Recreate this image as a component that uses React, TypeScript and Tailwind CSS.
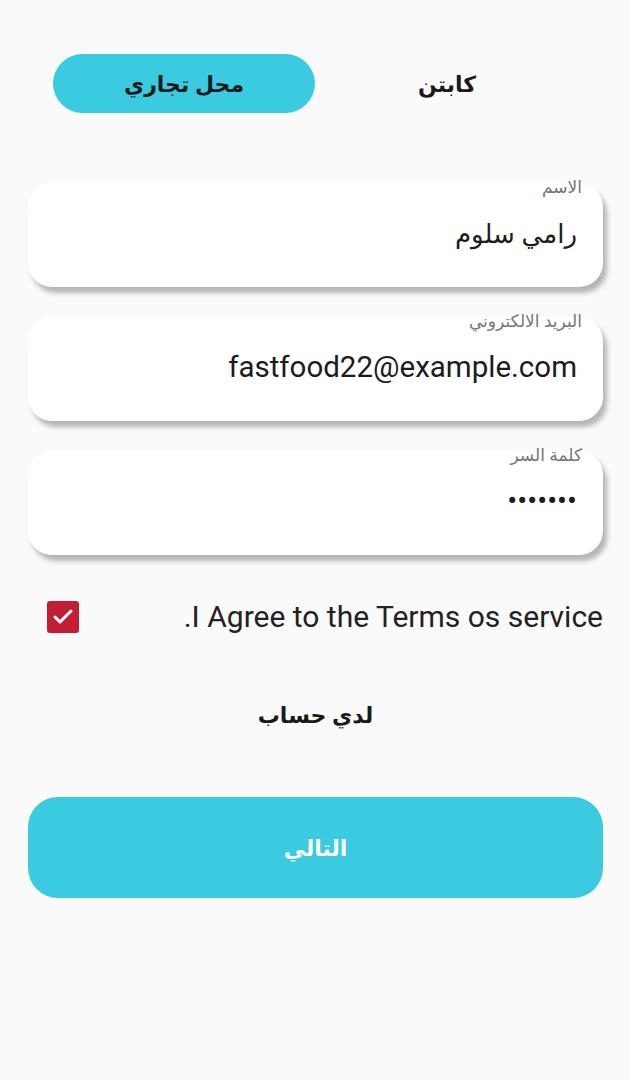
import { Check } from "lucide-react";

const arabic = "font-['Noto_Sans','DejaVu_Sans',sans-serif]";

const Field = ({ label, value, latin }: { label: string; value: string; latin?: boolean }) => (
    <div className="relative h-[104px] rounded-[24px] bg-white shadow-[4px_6px_5px_rgba(0,0,0,0.28)]">
        <span className={`absolute right-[21px] top-[-8px] text-[17px] leading-[24px] text-[#757575] ${arabic}`}>
            {label}
        </span>
        <div
            className={`flex h-full items-center justify-start pr-[26px] pb-[4px] text-[#1c1c1c] ${
                latin ? "font-['Roboto',sans-serif] text-[29.5px]" : `${arabic} text-[26px]`
            }`}
        >
            {value}
        </div>
    </div>
);

export default function App() {
    return (
        <div dir="rtl" className="min-h-[1080px] w-full bg-[#fafafa] px-[28px] pt-[54px]">
            {/* Tabs */}
            <div className="flex h-[59px] items-center pr-[24px] pl-[25px]">
                <div className={`flex flex-1 justify-center text-[22px] font-bold text-[#1a1a1a] ${arabic}`}>كابتن</div>
                <div
                    className={`flex h-[59px] w-[262px] items-center justify-center rounded-[30px] bg-[#3acbe0] text-[22px] font-bold text-[#1a1a1a] ${arabic}`}
                >
                    محل تجاري
                </div>
            </div>

            {/* Fields */}
            <div className="mt-[70px] flex flex-col gap-[30px]">
                <Field label="الاسم" value="رامي سلوم" />
                <Field label="البريد الالكتروني" value="fastfood22@example.com" latin />
                <Field label="كلمة السر" value="•••••••" latin />
            </div>

            {/* Terms */}
            <div className="mt-[46px] flex items-center justify-between pl-[19px]">
                <span className="font-['Roboto',sans-serif] text-[30px] leading-[32px] text-[#222]">
                    I Agree to the Terms os service.
                </span>
                <span className="flex h-[32px] w-[32px] items-center justify-center rounded-[3px] bg-[#c41e35]">
                    <Check className="h-[24px] w-[24px] text-white" strokeWidth={3} />
                </span>
            </div>

            <div className={`mt-[65px] text-center text-[22px] font-bold text-[#1a1a1a] ${arabic}`}>لدي حساب</div>

            {/* Next */}
            <button
                className={`mt-[66px] flex h-[101px] w-full items-center justify-center rounded-[30px] bg-[#3acbe0] text-[22px] font-bold text-white ${arabic}`}
            >
                التالي
            </button>
        </div>
    );
}
